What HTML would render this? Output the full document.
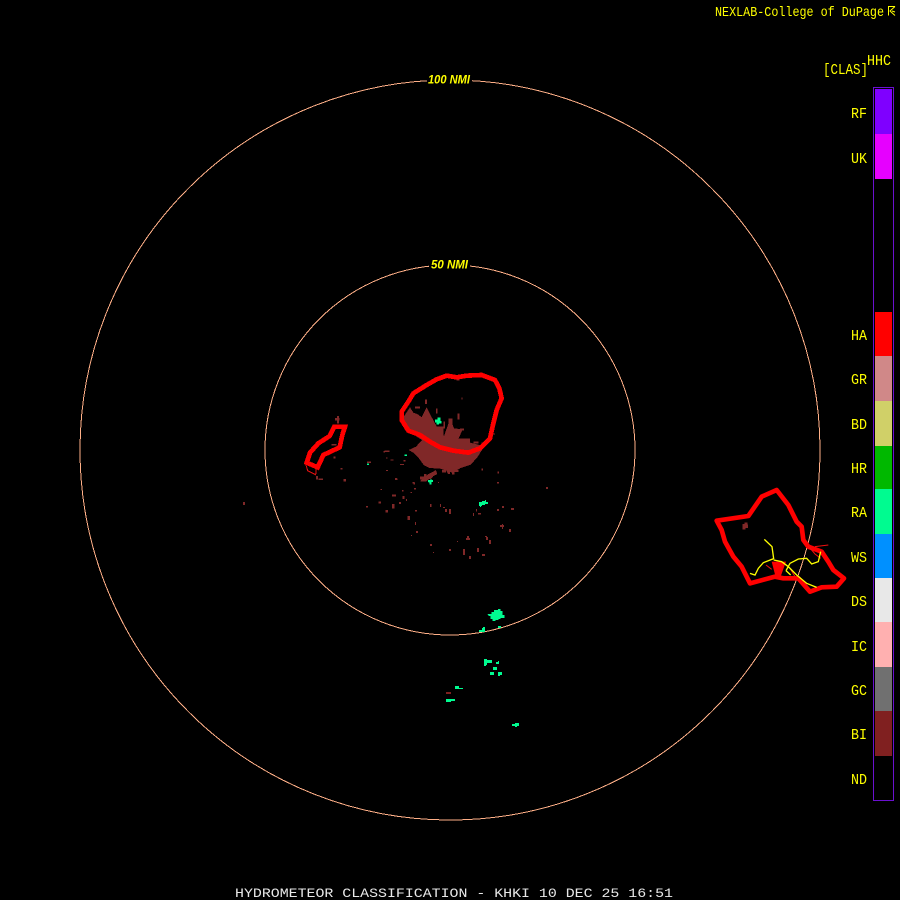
<!DOCTYPE html>
<html><head><meta charset="utf-8"><title>Hydrometeor Classification</title>
<style>
html,body{margin:0;padding:0;background:#000;width:900px;height:900px;overflow:hidden}
svg{display:block}
text{font-family:"Liberation Mono",monospace;fill:#ffff00}
.l{font-size:15px}
.n{font-family:"Liberation Sans",sans-serif;font-weight:bold;font-style:italic;font-size:12px}
</style></head><body>
<svg width="900" height="900" viewBox="0 0 900 900" xmlns="http://www.w3.org/2000/svg">
<rect width="900" height="900" fill="#000"/>
<g shape-rendering="crispEdges">
<circle cx="450" cy="450" r="185" fill="none" stroke="#ffb088" stroke-width="1"/>
<circle cx="450" cy="450" r="370" fill="none" stroke="#ffb088" stroke-width="1"/>
</g>
<rect x="427" y="73" width="45" height="12" fill="#000"/>
<rect x="429" y="258" width="41" height="12" fill="#000"/>
<text class="n" x="428" y="83.5" textLength="42" lengthAdjust="spacingAndGlyphs">100 NMI</text>
<text class="n" x="431" y="268.5" textLength="37" lengthAdjust="spacingAndGlyphs">50 NMI</text>

<!-- central echo, zoom coords -->
<g transform="translate(380 360) scale(.33333)" shape-rendering="crispEdges">
<g fill="#802828">
<path d="M68 175L90 142L100 158L112 162L125 172L140 142L150 162L165 190L180 215L192 228L205 192L213 180L222 205L248 208L236 235L262 246L302 256L306 270L292 292L272 314L242 324L216 338L180 326L148 324L132 316L116 294L100 278L86 270L108 260L126 240L85 214Z"/>
<rect x="135" y="118" width="6" height="14"/><rect x="168" y="145" width="5" height="15"/><rect x="232" y="160" width="6" height="18"/><rect x="244" y="112" width="4" height="6"/><rect x="105" y="140" width="15" height="5"/><rect x="190" y="185" width="5" height="20"/><rect x="240" y="205" width="12" height="6"/><rect x="280" y="245" width="15" height="5"/><rect x="304" y="248" width="6" height="6"/><rect x="330" y="220" width="15" height="4"/><rect x="14" y="272" width="14" height="4"/><rect x="32" y="298" width="8" height="4"/><rect x="18" y="292" width="5" height="3"/><rect x="60" y="312" width="12" height="3"/><rect x="18" y="330" width="5" height="3"/><rect x="70" y="300" width="6" height="4"/><rect x="45" y="355" width="8" height="5"/><rect x="120" y="350" width="22" height="8"/><rect x="132" y="342" width="8" height="22"/><rect x="100" y="368" width="5" height="5"/><rect x="160" y="338" width="6" height="4"/><rect x="305" y="325" width="4" height="7"/><rect x="352" y="335" width="5" height="5"/><rect x="268" y="295" width="8" height="8"/><rect x="230" y="55" width="8" height="6"/>
<rect x="205" y="175" width="12" height="40"/><rect x="150" y="200" width="40" height="40"/><rect x="100" y="180" width="60" height="40"/><rect x="160" y="235" width="110" height="40"/>
</g>
<path d="M200 47L230 52L260 47L305 45L345 60L358 85L365 115L350 150L340 190L330 235L300 265L265 278L220 272L180 262L150 245L120 225L85 212L65 180L65 155L85 125L100 100L140 75L170 58Z" fill="none" stroke="#ff0000" stroke-width="14" stroke-linejoin="round"/>
<path d="M165 178h8v-5h8v10h3v8h-7v3h-8v-6h-4zM145 362h8v-2h6v6h-4v8h-7v-6h-3zM74 284h7v4h-7z" fill="#00fb90"/>
</g>

<!-- left outline -->
<g transform="translate(295 410) scale(.33333)" shape-rendering="crispEdges">
<g fill="#802828">
<rect x="120" y="24" width="14" height="8"/><rect x="126" y="18" width="6" height="22"/>
<rect x="110" y="102" width="14" height="5"/><rect x="116" y="140" width="6" height="6"/><rect x="137" y="174" width="6" height="5"/><rect x="63" y="198" width="6" height="10"/><rect x="70" y="205" width="14" height="5"/><rect x="145" y="207" width="8" height="8"/><rect x="216" y="155" width="12" height="4"/><rect x="266" y="123" width="4" height="4"/>
</g>
<path d="M118 50L150 50L142 75L134 112L85 135L68 172L35 158L45 128L70 100L104 78Z" fill="none" stroke="#ff0000" stroke-width="14" stroke-linejoin="miter"/>
<path d="M33 165L38 182L62 194L64 174" fill="none" stroke="#e01010" stroke-width="3"/>
<rect x="216" y="160" width="6" height="5" fill="#00fb90"/>
</g>

<!-- right outline -->
<g transform="translate(700 480) scale(.33333)">
<g shape-rendering="crispEdges" fill="#802828"><path d="M128 132h6v-4h8v6h2v10h-8v4h-8z"/></g>
<path d="M50 122L145 108L185 50L230 30L265 75L290 125L305 140L310 180L325 200L365 215L385 245L400 270L432 295L410 320L365 322L330 335L295 295L250 295L225 290L150 310L125 260L100 230L75 185L65 150Z" fill="none" stroke="#ff0000" stroke-width="14" stroke-linejoin="round"/>
<path d="M215 245L258 245L240 295L228 295Z" fill="#ff0000"/>
<path d="M198 255L215 268M325 198L345 222L362 235M345 200L385 195M270 265L285 290" fill="none" stroke="#f01010" stroke-width="3"/>
<path d="M193 178L216 200L221 236L190 248L175 265L165 285L150 280M221 240L245 245L265 260L290 285L320 310L350 322M258 272L270 250L295 237L320 235L335 252L355 245L362 215M258 272L272 285" fill="none" stroke="#ffff00" stroke-width="4"/>
</g>

<!-- scatter -->
<g transform="translate(360 470) scale(.33333)" shape-rendering="crispEdges">
<g fill="#802828">
<rect x="78" y="0" width="6" height="3"/><rect x="105" y="24" width="6" height="5"/><rect x="158" y="36" width="6" height="5"/><rect x="62" y="57" width="4" height="3"/><rect x="96" y="74" width="12" height="6"/><rect x="126" y="60" width="5" height="5"/><rect x="128" y="78" width="6" height="9"/><rect x="138" y="87" width="3" height="6"/><rect x="152" y="66" width="4" height="3"/><rect x="162" y="54" width="6" height="5"/><rect x="55" y="95" width="8" height="6"/><rect x="18" y="108" width="6" height="5"/><rect x="96" y="102" width="8" height="14"/><rect x="117" y="96" width="6" height="6"/><rect x="76" y="120" width="8" height="8"/><rect x="165" y="120" width="6" height="5"/><rect x="142" y="138" width="8" height="12"/><rect x="165" y="156" width="3" height="9"/><rect x="168" y="183" width="6" height="6"/><rect x="153" y="195" width="3" height="3"/><rect x="210" y="102" width="5" height="9"/><rect x="240" y="102" width="3" height="9"/><rect x="249" y="111" width="6" height="3"/><rect x="255" y="117" width="6" height="9"/><rect x="267" y="117" width="6" height="15"/><rect x="348" y="117" width="3" height="8"/><rect x="354" y="129" width="9" height="5"/><rect x="339" y="129" width="3" height="9"/><rect x="411" y="117" width="6" height="6"/><rect x="426" y="108" width="6" height="6"/><rect x="453" y="114" width="9" height="6"/><rect x="420" y="165" width="12" height="6"/><rect x="426" y="162" width="3" height="15"/><rect x="447" y="177" width="6" height="9"/><rect x="558" y="51" width="6" height="6"/><rect x="411" y="36" width="6" height="5"/><rect x="234" y="36" width="3" height="3"/><rect x="210" y="222" width="6" height="6"/><rect x="219" y="246" width="3" height="3"/><rect x="267" y="237" width="6" height="6"/><rect x="291" y="213" width="3" height="3"/><rect x="318" y="204" width="12" height="6"/><rect x="321" y="198" width="6" height="6"/><rect x="375" y="198" width="6" height="3"/><rect x="378" y="201" width="6" height="9"/><rect x="387" y="210" width="6" height="12"/><rect x="351" y="234" width="6" height="12"/><rect x="309" y="237" width="6" height="18"/><rect x="327" y="258" width="6" height="9"/><rect x="366" y="252" width="9" height="6"/>
<path d="M180 35l8-12 6 0 10-10 12-6 12-7 4 12-12 6-6 8-8 2-6 6h-12zM246 0h12v8h-12zM276 0h20v6h-12v8h-8zM258 0h12v12h-6z"/>
</g>
<path d="M357 96h9v-3h9v-3h3v6h6v6h-9v3h-9v3h-3v3h-3v-3h-3zM204 30h6v-2h6v6h-3v9h-5v-7h-4z" fill="#00fb90"/>
</g>

<!-- green, south -->
<g transform="translate(430 600) scale(.33333)" shape-rendering="crispEdges" fill="#00fb90">
<path d="M174 42h10v-6h8v-6h12v-3h8v6h6v12h6v9h-12v3h-6v3h-9v3h-9v-6h-6v-9h-6v-3h-3z"/>
<path d="M147 90h9v-6h3v-3h6v15h-18zM204 78h9v6h-9z"/>
<path d="M162 177h9v3h15v9h-15v6h-3v3h-6zM198 186h6v-3h3v9h-9zM189 201h12v9h-12zM180 216h12v9h-12zM204 216h12v9h-6v3h-6zM75 258h12v6h12v3h-24zM48 297h27v6h-12v3h-15zM237 375h9v-3h9v-3h12v9h-6v3h-6v-3h-9v-3z"/>
<rect x="48" y="276" width="15" height="6" fill="#802020"/>
</g>
<rect x="243" y="502" width="2" height="3" fill="#802828"/>

<!-- color bar -->
<g shape-rendering="crispEdges">
<rect x="875" y="89" width="17" height="45" fill="#7f00ff"/>
<rect x="875" y="134" width="17" height="45" fill="#e600ff"/>
<rect x="875" y="312" width="17" height="44" fill="#ff0000"/>
<rect x="875" y="356" width="17" height="45" fill="#d08888"/>
<rect x="875" y="401" width="17" height="45" fill="#d0d068"/>
<rect x="875" y="446" width="17" height="43" fill="#00b800"/>
<rect x="875" y="489" width="17" height="45" fill="#00fb90"/>
<rect x="875" y="534" width="17" height="44" fill="#0090ff"/>
<rect x="875" y="578" width="17" height="44" fill="#e8e8e8"/>
<rect x="875" y="622" width="17" height="45" fill="#ffb0b0"/>
<rect x="875" y="667" width="17" height="44" fill="#707070"/>
<rect x="875" y="711" width="17" height="45" fill="#802020"/>
<rect x="873.5" y="87.5" width="20" height="713" fill="none" stroke="#6a10d0" stroke-width="1"/>
</g>
<text class="l" x="851" y="118" textLength="16" lengthAdjust="spacingAndGlyphs">RF</text>
<text class="l" x="851" y="163" textLength="16" lengthAdjust="spacingAndGlyphs">UK</text>
<text class="l" x="851" y="340" textLength="16" lengthAdjust="spacingAndGlyphs">HA</text>
<text class="l" x="851" y="384" textLength="16" lengthAdjust="spacingAndGlyphs">GR</text>
<text class="l" x="851" y="429" textLength="16" lengthAdjust="spacingAndGlyphs">BD</text>
<text class="l" x="851" y="473" textLength="16" lengthAdjust="spacingAndGlyphs">HR</text>
<text class="l" x="851" y="517" textLength="16" lengthAdjust="spacingAndGlyphs">RA</text>
<text class="l" x="851" y="562" textLength="16" lengthAdjust="spacingAndGlyphs">WS</text>
<text class="l" x="851" y="606" textLength="16" lengthAdjust="spacingAndGlyphs">DS</text>
<text class="l" x="851" y="651" textLength="16" lengthAdjust="spacingAndGlyphs">IC</text>
<text class="l" x="851" y="695" textLength="16" lengthAdjust="spacingAndGlyphs">GC</text>
<text class="l" x="851" y="739" textLength="16" lengthAdjust="spacingAndGlyphs">BI</text>
<text class="l" x="851" y="784" textLength="16" lengthAdjust="spacingAndGlyphs">ND</text>
<text class="l" x="867" y="65" textLength="24" lengthAdjust="spacingAndGlyphs">HHC</text>
<text class="l" x="823" y="74" textLength="45" lengthAdjust="spacingAndGlyphs">[CLAS]</text>
<text x="715" y="16" font-size="14" textLength="169" lengthAdjust="spacingAndGlyphs">NEXLAB-College of DuPage</text>
<path d="M895 6.5H888.5V15.5M895 15.5L890 11L895 6.5M892 11L895 12" fill="none" stroke="#ffff00" stroke-width="1"/>
<text x="235" y="897" font-size="13" textLength="438" lengthAdjust="spacingAndGlyphs" style="fill:#e8e8e8">HYDROMETEOR CLASSIFICATION - KHKI 10 DEC 25 16:51</text>
</svg>
</body></html>
